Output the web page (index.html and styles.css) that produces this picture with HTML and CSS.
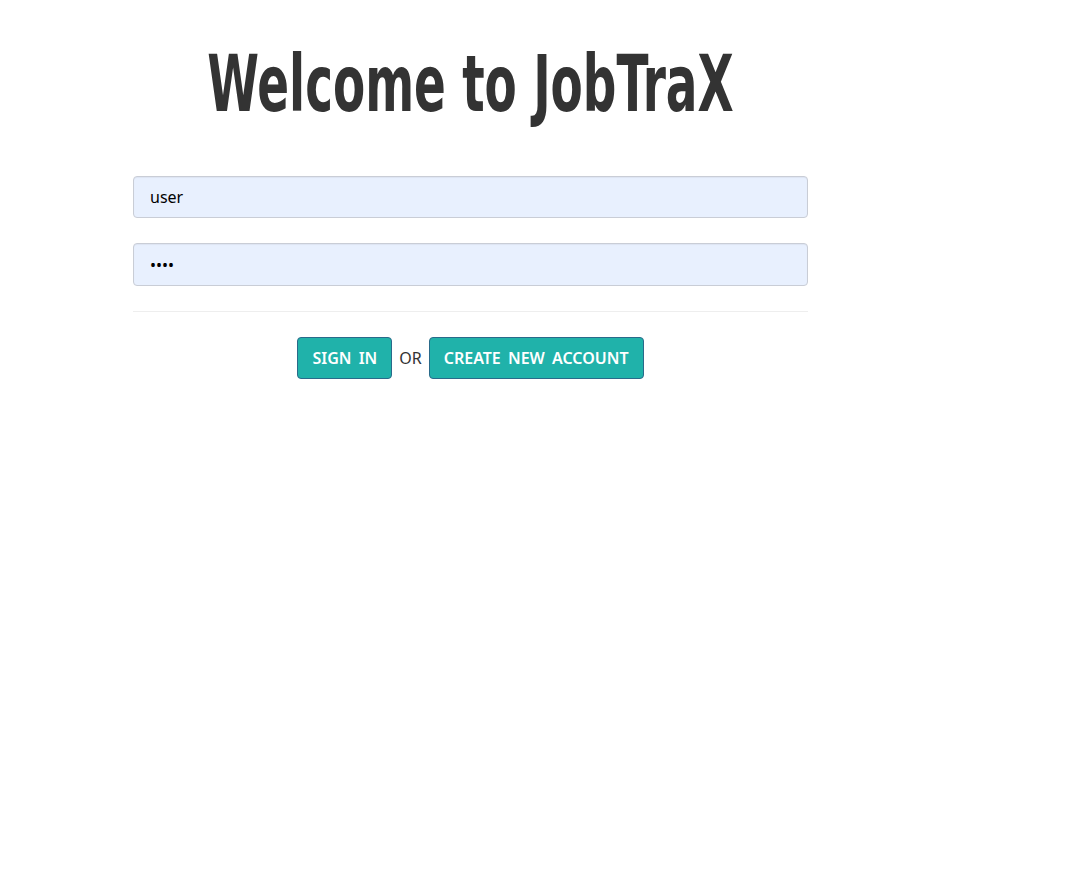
FILE: index.html
```html
<!DOCTYPE html>
<html>
<head>
<meta charset="utf-8">
<link rel="stylesheet" href="styles.css">
</head>
<body>
<div class="page">
  <div class="panel">
    <h1 class="title"><span class="title-text">Welcome to JobTraX</span></h1>
    <form class="form">
      <div class="field"><input class="input" type="text" value="user"></div>
      <div class="field"><input class="input input-tall" type="password" value="pass"></div>
      <hr class="divider">
      <div class="actions">
        <button type="button" class="btn">SIGN IN</button>
        <span class="or">OR</span>
        <button type="button" class="btn">CREATE NEW ACCOUNT</button>
      </div>
    </form>
  </div>
</div>
</body>
</html>
```
FILE: styles.css
```css
html, body { margin: 0; padding: 0; background: #fff; }
body { font-family: "Noto Sans", "Open Sans", sans-serif; color: #333; }
.page { padding-left: 133px; width: 675px; }
.panel { display: flex; flex-direction: column; }
.title {
  margin: 38px 0 0 0;
  height: 92px;
  display: flex;
  justify-content: center;
  white-space: nowrap;
  font-family: "DejaVu Sans Condensed", "DejaVu Sans", sans-serif;
  font-weight: bold;
  font-size: 79px;
  line-height: 92px;
  color: #333;
  transform: scaleX(0.66);
}
.title-text { flex: none; }
.form { margin-top: 46px; display: flex; flex-direction: column; }
.field { margin-bottom: 25px; }
.input {
  box-sizing: border-box;
  width: 100%;
  height: 42px;
  padding: 0 16px;
  border: 1px solid #c9cdd6;
  border-radius: 4px;
  background: #e8f0fe;
  font-family: "Noto Sans", sans-serif;
  font-size: 16px;
  color: #000;
  box-shadow: inset 0 1px 1px rgba(0,0,0,0.05);
}
.input-tall { height: 43px; }
.divider { margin: 0 0 25px 0; border: 0; border-top: 1px solid #eee; height: 0; }
.actions { display: flex; justify-content: center; align-items: center; gap: 7px; }
.btn {
  height: 42px;
  padding: 0 14px;
  border: 1px solid #2a6a8a;
  border-radius: 4px;
  background: #20b2aa;
  color: #fff;
  font-family: "Noto Sans", sans-serif;
  font-size: 16px;
  font-weight: 600;
  word-spacing: 3px;
}
.or { font-size: 16px; color: #333; }
```
